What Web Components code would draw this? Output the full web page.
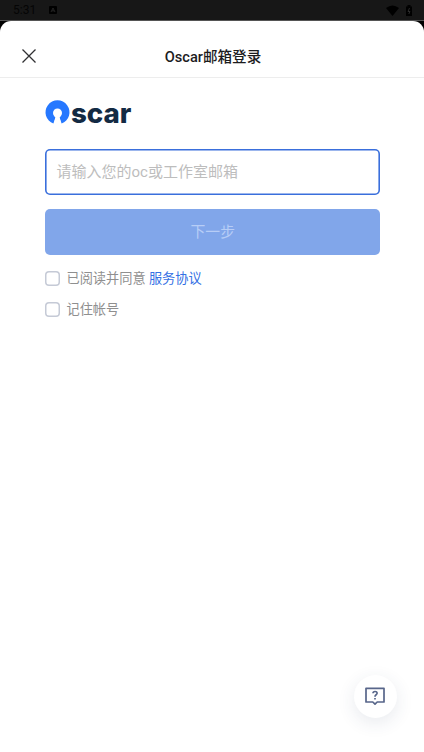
<!DOCTYPE html>
<html lang="zh-CN">
<head>
<meta charset="utf-8">
<title>Oscar邮箱登录</title>
<style>
html,body{margin:0;height:100%;background:#000;overflow:hidden}
body{font-family:Roboto,"Noto Sans CJK SC",sans-serif}
</style>
</head>
<body>
<login-page></login-page>
<script>
const define = (name, html) => {
  const template = document.createElement('template');
  template.innerHTML = html;
  customElements.define(name, class extends HTMLElement {
    constructor() {
      super();
      this.attachShadow({mode: 'open'}).append(template.content.cloneNode(true));
    }
  });
};

define('status-bar', `
<style>
:host{display:flex;align-items:center;height:20px;box-sizing:border-box;padding:0 12px 0 13px;background:#171717;color:#050505;font-size:12px;line-height:20px}
svg{display:block}
.note{margin-left:13px}
.wifi{margin-left:auto}
.battery{margin-left:7px}
</style>
<span>5:31</span>
<svg class="note" width="8" height="8" viewBox="0 0 8 8"><rect width="8" height="8" rx="1"/><path d="M2 6 4 2 6 6M3 4.8H5" fill="none" stroke="#252525"/></svg>
<svg class="wifi" width="13" height="11" viewBox="0 0 13 11"><path d="M0 3Q6.500-2 13 3L6.500 11Z"/></svg>
<svg class="battery" width="6" height="11" viewBox="0 0 6 11"><path d="M0 1.500H1.500V0H4.500V1.500H6V11H0Z"/><path d="M3.500 3 2 6.500H4L2.800 9" fill="none" stroke="#333" stroke-width=".8"/></svg>`);

define('title-bar', `
<style>
:host{display:grid;grid-template-columns:57px 1fr 55px;align-items:center;height:57px;box-sizing:border-box;padding-top:14px;border-bottom:1px solid #ededed;flex:none}
h1{margin:0;padding-top:1px;text-align:center;font-size:14.600px;line-height:20px;font-weight:500;color:#1c1c1e;white-space:nowrap}
svg{display:block;margin-left:22px}
</style>
<svg width="14" height="14" viewBox="0 0 14 14"><path d="M.5.5 13.500 13.500M13.500.5.5 13.500" fill="none" stroke="#303033" stroke-width="1.300"/></svg>
<h1><slot></slot></h1>`);

define('oscar-logo', `
<style>:host{display:block;height:28px}svg{display:block;overflow:visible}</style>
<svg width="90" height="28" viewBox="0 0 90 28">
<path d="M8.400 24.600A12 12 0 1 1 16.600 24.600L14.100 17.200H10.900Z" fill="#2678ff"/>
<circle cx="12.500" cy="14" r="4.500" fill="#fff"/>
<path d="M10.800 17 8.700 25.500H16.300L14.200 17Z" fill="#fff"/>
<text x="26" y="23.700" textLength="60.500" lengthAdjust="spacingAndGlyphs" font-family="Inter" font-weight="800" font-size="27.500" fill="#132a43">scar</text>
</svg>`);

define('mail-field', `
<style>
:host{display:flex;align-items:center;height:45.500px;box-sizing:border-box;padding:0 12px 2px;box-shadow:inset 0 0 0 1.600px #3a6fdc;border-radius:5px;background:#fff;font-size:15px;color:#bdbdbd;white-space:nowrap}
</style><span><slot></slot></span>`);

define('next-button', `
<style>
:host{display:block}
button{display:block;width:100%;height:46px;padding:1px 0 0 1px;border:0;border-radius:5px;background:#81a6ea;color:#b7cdf6;font:400 14.800px/20px Roboto,"Noto Sans CJK SC",sans-serif}
</style><button type="button"><slot></slot></button>`);

define('check-row', `
<style>
:host{display:flex;align-items:center;gap:7px;height:20px;font-size:13.200px;line-height:20px;color:#8f8f8f;white-space:nowrap}
i{box-sizing:border-box;width:15px;height:15px;box-shadow:inset 0 0 0 1.500px #c5cad6;border-radius:4px}
span{padding-top:1px}
::slotted(b){font-weight:400;color:#3470e4}
</style><i></i><span><slot></slot></span>`);

define('help-button', `
<style>
:host{position:absolute;right:27.500px;bottom:34.500px;display:grid;place-items:center;width:43px;height:43px;border-radius:50%;background:#fff;box-shadow:0 5px 18px rgba(50,65,100,.11)}
svg{display:block}
</style>
<svg width="20" height="20" viewBox="0 0 20 20" fill="none" stroke="#58668a" stroke-width="1.700" stroke-linejoin="round">
<path d="M1 2.300H19V16H12.200L10 18.200 7.800 16H1Z"/>
<path d="M8 7.300C8 4.900 12.200 4.900 12.100 7.300C12 8.900 10 8.700 10 10.700"/><path d="M10 12V13.600"/>
</svg>`);

define('login-page', `
<style>
:host{display:flex;flex-direction:column;height:100vh;background:#171717}
main{position:relative;flex:1;display:flex;flex-direction:column;background:#fff;border-radius:11px 11px 0 0}
.sheet{display:flex;flex-direction:column;flex:1;background:#000;border-top:1px solid #555}
form{display:flex;flex-direction:column;padding:21px 44px 0 44.500px}
mail-field{margin:22px 0 14px}
next-button{margin-bottom:13.500px}
check-row + check-row{margin-top:11px}
</style>
<status-bar></status-bar>
<div class="sheet"><main>
<title-bar>Oscar邮箱登录</title-bar>
<form>
<oscar-logo></oscar-logo>
<mail-field>请输入您的oc或工作室邮箱</mail-field>
<next-button>下一步</next-button>
<check-row>已阅读并同意 <b>服务协议</b></check-row>
<check-row>记住帐号</check-row>
</form>
<help-button></help-button>
</main></div>`);
</script>
</body>
</html>
